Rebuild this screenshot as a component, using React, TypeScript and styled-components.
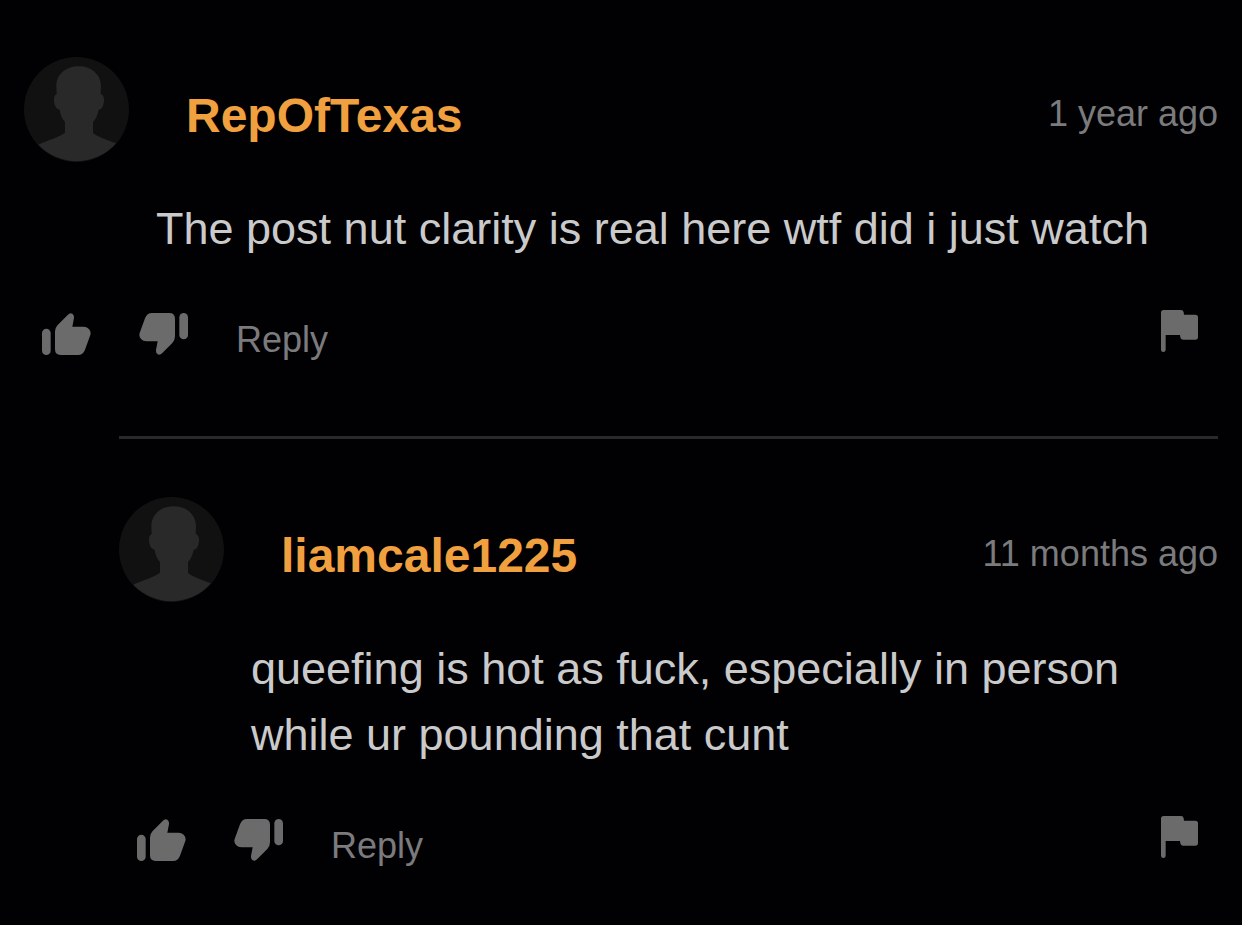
import React from "react";
import styled, { createGlobalStyle } from "styled-components";

const GlobalStyle = createGlobalStyle`
  *, *::before, *::after { box-sizing: border-box; }
  body {
    margin: 0;
    background: #010103;
    color: #cacacb;
    font-family: "Liberation Sans", Arial, Helvetica, sans-serif;
  }
`;

const Thread = styled.main`
  padding: 0 24px;
`;

const Replies = styled.section`
  margin: 66px 0 0 95px;
  border-top: 3px solid #29292b;
`;

const CommentBox = styled.article<{ $top: number }>`
  padding-top: ${(p) => p.$top}px;
`;

const Header = styled.header`
  display: flex;
  align-items: center;
`;

const AvatarSvg = styled.svg`
  display: block;
  flex: none;
  width: 105px;
  height: 105px;
`;

const UserName = styled.a`
  margin-left: 57px;
  padding-top: 12px;
  color: #f0a03e;
  font-size: 48px;
  font-weight: 700;
  line-height: 56px;
  text-decoration: none;
`;

const Posted = styled.time`
  margin-left: auto;
  padding-top: 8px;
  color: #7b7b7d;
  font-size: 36px;
  line-height: 42px;
  white-space: nowrap;
`;

const Message = styled.p`
  margin: 34px 0 0 132px;
  font-size: 45px;
  line-height: 66px;
`;

const Actions = styled.footer`
  display: flex;
  align-items: flex-start;
  gap: 48px;
  margin-top: 48px;
  padding: 0 20px 0 18px;
`;

const ActionButton = styled.button<{ $drop?: number }>`
  padding: ${(p) => p.$drop ?? 0}px 0 0;
  border: 0;
  background: none;
  color: #6b6b6c;
  font: inherit;
  cursor: pointer;

  svg {
    display: block;
    fill: currentColor;
  }
`;

const ReplyButton = styled(ActionButton)`
  color: #7b7b7d;
  font-size: 36px;
  line-height: 60px;
`;

const FlagButton = styled(ActionButton)`
  margin-left: auto;
`;

const Avatar = () => (
  <AvatarSvg viewBox="0 0 315 315" aria-hidden="true">
    <circle cx="157.500" cy="157.500" r="157.500" fill="#111112" />
    <path
      fill="#292929"
      d="M164 28C202 28 231 52 231 88L230 111C239 114 242 124 239 139C237 152 231 158 224 158C221 174 215 187 207 195L207 228C219 239 244 247 276 259A157.500 157.500 0 0 1 43 263C72 249 107 240 123 227L123 195C115 187 109 174 107 158C99 157 93 150 91 139C88 124 91 114 98 111L97 88C97 52 126 28 164 28Z"
    />
  </AvatarSvg>
);

const ThumbIcon = ({ down = false }: { down?: boolean }) => (
  <svg width="49" height="42" viewBox="0 0 147 126" aria-hidden="true">
    <g transform={down ? "rotate(180 73.5 63)" : undefined}>
      <rect x="0" y="47" width="26" height="79" rx="13" />
      <path d="M39 56Q39 44 47 36L77 6Q84-2 91 2Q97 6 96 15L91 41H125C139 41 149 54 145 66L129 110Q123 126 108 126H56Q39 126 39 109Z" />
    </g>
  </svg>
);

const FlagIcon = () => (
  <svg width="37" height="42" viewBox="0 0 111 126" aria-hidden="true">
    <path d="M8 0H60Q67 0 68 7L69 14H103Q111 14 111 22V81Q111 89 103 89H66Q59 89 58 82L57 75H14V119Q14 126 7 126Q0 126 0 119V8Q0 0 8 0Z" />
  </svg>
);

type CommentProps = { user: string; posted: string; text: string; top: number };

const Comment = ({ user, posted, text, top }: CommentProps) => (
  <CommentBox $top={top}>
    <Header>
      <Avatar />
      <UserName href={`#${user}`}>{user}</UserName>
      <Posted>{posted}</Posted>
    </Header>
    <Message>{text}</Message>
    <Actions>
      <ActionButton type="button" $drop={3} aria-label="Like">
        <ThumbIcon />
      </ActionButton>
      <ActionButton type="button" $drop={3} aria-label="Dislike">
        <ThumbIcon down />
      </ActionButton>
      <ReplyButton type="button">Reply</ReplyButton>
      <FlagButton type="button" aria-label="Report">
        <FlagIcon />
      </FlagButton>
    </Actions>
  </CommentBox>
);

export default function App() {
  return (
    <>
      <GlobalStyle />
      <Thread>
        <Comment
          top={57}
          user="RepOfTexas"
          posted="1 year ago"
          text="The post nut clarity is real here wtf did i just watch"
        />
        <Replies>
          <Comment
            top={58}
            user="liamcale1225"
            posted="11 months ago"
            text="queefing is hot as fuck, especially in person while ur pounding that cunt"
          />
        </Replies>
      </Thread>
    </>
  );
}
